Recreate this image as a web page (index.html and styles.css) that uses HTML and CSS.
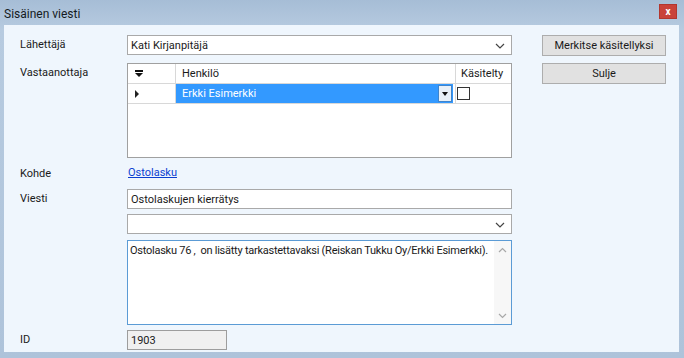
FILE: index.html
```html
<!DOCTYPE html>
<html>
<head>
  <title>Sisäinen viesti</title>
  <link rel="stylesheet" href="styles.css">
</head>
<body>

<div class="window">
  <div class="titlebar">
    <span class="title">Sisäinen viesti</span>
    <span class="close">x</span>
  </div>

  <div class="content">
    <div class="form">
      <div class="row">
        <label>Lähettäjä</label>
        <div class="combo">
          <span>Kati Kirjanpitäjä</span>
          <svg class="chev" width="10" height="6" viewBox="0 0 10 6"><path d="M1 1 L5 5 L9 1" fill="none" stroke="#444" stroke-width="1.2"/></svg>
        </div>
      </div>

      <div class="row row-grid">
        <label>Vastaanottaja</label>
        <div class="grid">
          <div class="grid-head">
            <div class="rh">
              <svg width="10" height="8" viewBox="0 0 10 8"><rect x="1" y="0" width="8" height="2" fill="#111"/><path d="M1 3 L9 3 L5 7 Z" fill="#111"/></svg>
            </div>
            <div class="col-name">Henkilö</div>
            <div class="col-check">Käsitelty</div>
          </div>
          <div class="grid-row">
            <div class="rh">
              <svg width="6" height="8" viewBox="0 0 6 8"><path d="M1 0 L5 4 L1 8 Z" fill="#222"/></svg>
            </div>
            <div class="col-name selected">
              <span>Erkki Esimerkki</span>
              <span class="cell-drop">
                <svg width="6" height="4" viewBox="0 0 6 4"><path d="M0 0 L6 0 L3 4 Z" fill="#111"/></svg>
              </span>
            </div>
            <div class="col-check"><span class="checkbox"></span></div>
          </div>
        </div>
      </div>

      <div class="row row-kohde">
        <label>Kohde</label>
        <a href="#" class="link">Ostolasku</a>
      </div>

      <div class="row row-viesti">
        <label>Viesti</label>
        <div class="textbox">Ostolaskujen kierrätys</div>
      </div>

      <div class="row row-tight">
        <label></label>
        <div class="combo">
          <span></span>
          <svg class="chev" width="10" height="6" viewBox="0 0 10 6"><path d="M1 1 L5 5 L9 1" fill="none" stroke="#444" stroke-width="1.2"/></svg>
        </div>
      </div>

      <div class="row row-memo">
        <label></label>
        <div class="memo">
          <div class="memo-text">Ostolasku 76 ,&nbsp; on lisätty tarkastettavaksi (Reiskan Tukku Oy/Erkki Esimerkki).</div>
          <div class="scrollbar">
            <svg width="9" height="6" viewBox="0 0 9 6"><path d="M1 5 L4.5 1.5 L8 5" fill="none" stroke="#a8a8a8" stroke-width="1.2"/></svg>
            <svg width="9" height="6" viewBox="0 0 9 6"><path d="M1 1 L4.5 4.5 L8 1" fill="none" stroke="#a8a8a8" stroke-width="1.2"/></svg>
          </div>
        </div>
      </div>

      <div class="row row-tight">
        <label>ID</label>
        <div class="idbox">1903</div>
      </div>
    </div>

    <div class="actions">
      <button>Merkitse käsitellyksi</button>
      <button>Sulje</button>
    </div>
  </div>
</div>

</body>
</html>
```

FILE: styles.css
```css
body {
  margin: 0;
  font-family: Roboto, "Liberation Sans", sans-serif;
  font-size: 11px;
  color: #1a1a1a;
  background: #aac0d8;
}

.window {
  width: 684px;
  height: 358px;
  box-sizing: border-box;
  padding: 0 5px 6px 4px;
  background: linear-gradient(#a6bdd6, #b7cbe0 30px, #aec3da);
  display: flex;
  flex-direction: column;
}

.titlebar {
  height: 25px;
  display: flex;
  align-items: center;
  justify-content: space-between;
}

.title {
  font-size: 12px;
  color: #151b22;
  padding-top: 2px;
}

.close {
  width: 18px;
  height: 15px;
  margin-right: 2px;
  margin-bottom: 2px;
  background: #c9423a;
  color: #fff;
  font-size: 10px;
  font-weight: bold;
  line-height: 13px;
  text-align: center;
  box-sizing: border-box;
  border: 1px solid #b2362f;
}

.content {
  flex: 1;
  background: #eff6fd;
  display: flex;
  padding: 10px 0 0 16px;
}

.form {
  width: 496px;
}

.row {
  display: flex;
}

.row label {
  width: 107px;
  flex: none;
  line-height: 19px;
}

.row-grid { margin-top: 8px; }
.row-kohde { margin-top: 6px; }
.row-viesti { margin-top: 6px; }
.row-tight { margin-top: 5px; }
.row-memo { margin-top: 6px; }

.combo, .textbox, .idbox {
  width: 385px;
  height: 20px;
  box-sizing: border-box;
  border: 1px solid #a9a9a9;
  background: #fff;
  display: flex;
  align-items: center;
  justify-content: space-between;
  padding: 0 6px 0 3px;
}

.chev {
  margin-top: 1px;
}

.grid {
  width: 385px;
  height: 95px;
  box-sizing: border-box;
  border: 1px solid #a0a0a0;
  background: #fff;
}

.grid-head, .grid-row {
  display: flex;
  height: 19px;
}

.grid-head {
  border-bottom: 1px solid #d8d8d8;
}

.grid-row {
  border-bottom: 1px solid #d8d8d8;
}

.rh {
  width: 48px;
  flex: none;
  box-sizing: border-box;
  border-right: 1px solid #d8d8d8;
  display: flex;
  align-items: center;
  padding-left: 6px;
}

.col-name {
  flex: 1;
  display: flex;
  align-items: center;
  padding-left: 6px;
}

.col-check {
  width: 56px;
  flex: none;
  box-sizing: border-box;
  border-left: 1px solid #d8d8d8;
  display: flex;
  align-items: center;
  padding-left: 5px;
}

.grid-row .col-check {
  padding-left: 1px;
}

.col-name.selected {
  background: #3399ff;
  color: #fff;
  justify-content: space-between;
  padding-right: 1px;
  margin-right: 2px;
}

.cell-drop {
  width: 14px;
  height: 17px;
  box-sizing: border-box;
  background: #e8f0f8;
  border: 1px solid #3f84cc;
  display: flex;
  align-items: center;
  justify-content: center;
}

.checkbox {
  width: 13px;
  height: 13px;
  box-sizing: border-box;
  border: 1px solid #333;
  background: #fff;
}

.link {
  color: #0b3fd1;
  line-height: 17px;
  margin-left: 1px;
}

.memo {
  width: 385px;
  height: 85px;
  box-sizing: border-box;
  border: 1px solid #5b9bd5;
  background: #fff;
  display: flex;
}

.memo-text {
  flex: 1;
  padding: 2px 2px;
  line-height: 16px;
  letter-spacing: -0.25px;
}

.scrollbar {
  width: 17px;
  background: #f7f7f7;
  display: flex;
  flex-direction: column;
  justify-content: space-between;
  align-items: center;
  padding: 6px 0 5px;
}

.idbox {
  width: 100px;
  background: #f0f0f0;
  border-color: #9d9d9d;
}

.actions {
  margin-left: 26px;
  display: flex;
  flex-direction: column;
  gap: 7px;
}

button {
  width: 124px;
  height: 21px;
  font-family: Roboto, "Liberation Sans", sans-serif;
  font-size: 11px;
  color: #1a1a1a;
  background: #e1e1e1;
  border: 1px solid #adadad;
  padding: 0;
}
```
